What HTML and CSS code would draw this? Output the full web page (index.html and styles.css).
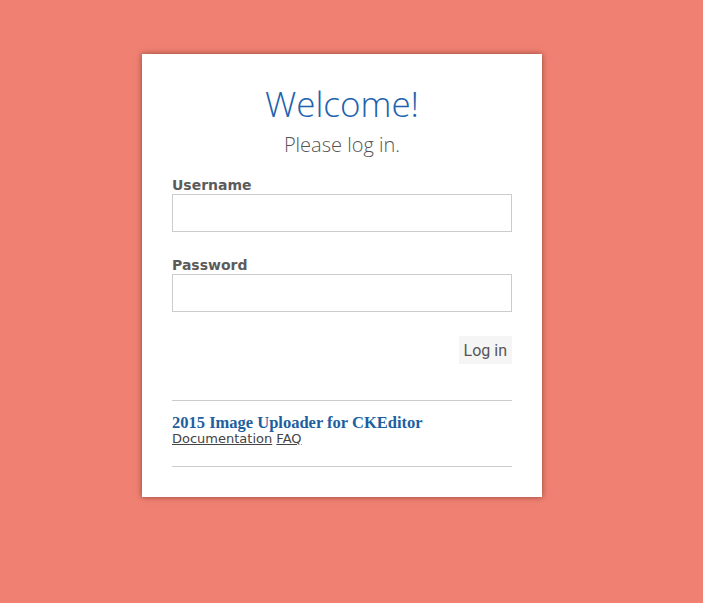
FILE: index.html
```html
<!DOCTYPE html>
<html>
<head>
<meta charset="utf-8">
<link rel="stylesheet" href="styles.css">
</head>
<body>
<div class="card">
  <h1 class="title">Welcome!</h1>
  <p class="subtitle">Please log in.</p>
  <form class="form">
    <label class="label">Username</label>
    <input class="input" type="text">
    <label class="label label-pw">Password</label>
    <input class="input" type="password">
    <div class="actions"><button class="btn" type="button">Log in</button></div>
  </form>
  <hr class="rule">
  <div class="footer">
    <div class="product">2015 Image Uploader for CKEditor</div>
    <div class="links"><a href="#">Documentation</a> <a href="#">FAQ</a></div>
  </div>
  <hr class="rule">
</div>
</body>
</html>
```
FILE: styles.css
```css
html, body { margin: 0; padding: 0; }
body {
  background: #f08172;
  height: 603px;
  font-family: "DejaVu Sans", Verdana, sans-serif;
}
.card {
  box-sizing: border-box;
  width: 400px;
  margin: 54px 0 0 142px;
  background: #fff;
  padding: 24px 30px 30px;
  box-shadow: 0 0 6px rgba(80, 30, 20, 0.6);
}
.title {
  margin: 0;
  text-align: center;
  font-family: "Open Sans", sans-serif;
  font-weight: 300;
  font-size: 35px;
  line-height: 52px;
  color: #1d63ad;
}
.subtitle {
  margin: 0;
  text-align: center;
  font-family: "Open Sans", sans-serif;
  font-weight: 300;
  font-size: 20px;
  line-height: 30px;
  color: #555;
}
.form { display: flex; flex-direction: column; margin-top: 16px; }
.label {
  font-weight: bold;
  font-size: 14px;
  line-height: 18px;
  color: #5b5b5b;
}
.label-pw { margin-top: 24px; }
.input {
  box-sizing: border-box;
  width: 340px;
  height: 38px;
  border: 1px solid #ccc;
  margin: 0;
  padding: 4px 8px;
  background: #fff;
}
.actions { display: flex; justify-content: flex-end; margin-top: 24px; }
.btn {
  border: 0;
  background: #f5f5f5;
  font-family: "Roboto", sans-serif;
  font-size: 16px;
  color: #555;
  height: 28px;
  padding: 0 5px;
}
.rule {
  border: 0;
  border-top: 1px solid #ccc;
  margin: 36px 0 0;
  height: 0;
}
.footer { padding: 13px 0 19px; }
.footer + .rule { margin-top: 0; }
.product {
  font-family: "Liberation Serif", Georgia, serif;
  font-weight: bold;
  font-size: 16.5px;
  line-height: 17px;
  color: #1d5f9f;
}
.links { font-size: 13px; line-height: 16px; }
.links a { color: #444; }
```
